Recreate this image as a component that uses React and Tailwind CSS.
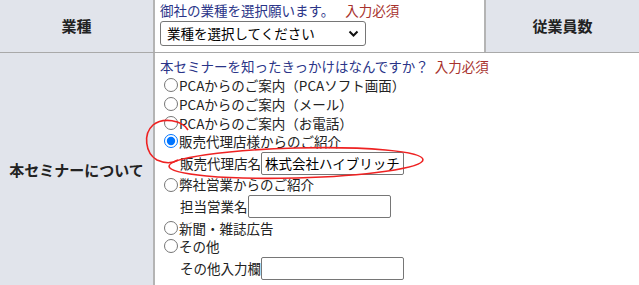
import React from 'react';

const font = { fontFamily: '"Noto Sans CJK JP", "Noto Sans", sans-serif' };

const RadioRow = ({ label, checked }) => (
  <label className="flex items-center h-[18.7px] text-[13.5px] text-[#222] whitespace-nowrap">
    <input
      type="radio"
      name="seminar"
      defaultChecked={checked}
      className="w-[14px] h-[14px] ml-[4px] mr-[1px] m-0"
    />
    <span>{label}</span>
  </label>
);

const InputRow = ({ label, value, width }) => (
  <div className="flex items-center h-[24.5px] pl-[20px] text-[13.5px] text-[#222] whitespace-nowrap">
    <span>{label}</span>
    <input
      type="text"
      defaultValue={value}
      className={`${width} h-[23px] border border-[#767676] rounded-[2px] px-[3px] text-[13.5px] text-black bg-white outline-none`}
      style={font}
    />
  </div>
);

export default function App() {
  return (
    <div className="relative w-[639px] h-[285px] overflow-hidden bg-white" style={font}>
      {/* header row */}
      <div className="flex h-[53px] border-b border-[#a9a9a9]">
        <div className="w-[155px] bg-[#e1e4eb] border-r-2 border-[#b4b4b4] flex items-center justify-center font-bold text-[15px] text-[#222]">
          業種
        </div>
        <div className="w-[329px] pl-[5px] pt-[1px]">
          <div className="text-[13.5px] leading-[18px] text-[#2a3488] whitespace-nowrap">
            御社の業種を選択願います。
            <span className="ml-[11px] text-[#a8322d]">入力必須</span>
          </div>
          <div className="mt-[2px] w-[206px] h-[25px] border border-[#767676] rounded-[3px] flex items-center justify-between pl-[6px] pr-[6px] text-[13.5px] text-black">
            <span>業種を選択してください</span>
            <svg width="11" height="7" viewBox="0 0 11 7" fill="none">
              <path d="M1.5 1.5 L5.5 5.5 L9.5 1.5" stroke="#111" strokeWidth="2" />
            </svg>
          </div>
        </div>
        <div className="flex-1 bg-[#e1e4eb] border-l-2 border-[#b4b4b4] flex items-center justify-center font-bold text-[15px] text-[#222]">
          従業員数
        </div>
      </div>

      {/* seminar row */}
      <div className="flex h-[232px]">
        <div className="w-[155px] bg-[#e1e4eb] border-r-2 border-[#b4b4b4] flex items-center justify-center font-bold text-[15px] text-[#222] pt-[2px]">
          本セミナーについて
        </div>
        <div className="flex-1 pl-[5px] pt-[4px]">
          <div className="text-[13.5px] leading-[18px] text-[#2a3488] whitespace-nowrap">
            本セミナーを知ったきっかけはなんですか？
            <span className="ml-[6px] text-[#a8322d]">入力必須</span>
          </div>
          <div className="mt-[1px]">
            <RadioRow label="PCAからのご案内（PCAソフト画面）" />
            <RadioRow label="PCAからのご案内（メール）" />
            <RadioRow label="PCAからのご案内（お電話）" />
            <RadioRow label="販売代理店様からのご紹介" checked />
            <InputRow label="販売代理店名" value="株式会社ハイブリッチ" width="w-[143px]" />
            <RadioRow label="弊社営業からのご紹介" />
            <InputRow label="担当営業名" value="" width="w-[143px]" />
            <RadioRow label="新聞・雑誌広告" />
            <RadioRow label="その他" />
            <InputRow label="その他入力欄" value="" width="w-[143px]" />
          </div>
        </div>
      </div>

      {/* hand-drawn red marks */}
      <svg className="absolute inset-0 pointer-events-none" width="639" height="285">
        <path
          d="M188 130 C182 120 163 117 153 125 C143 134 145 153 157 160 C166 164 173 163 178 160"
          stroke="#ee2222"
          strokeWidth="1.6"
          fill="none"
        />
        <ellipse
          cx="296"
          cy="163"
          rx="127"
          ry="15"
          transform="rotate(-1.5 296 163)"
          stroke="#ee2222"
          strokeWidth="1.6"
          fill="none"
        />
      </svg>
    </div>
  );
}
